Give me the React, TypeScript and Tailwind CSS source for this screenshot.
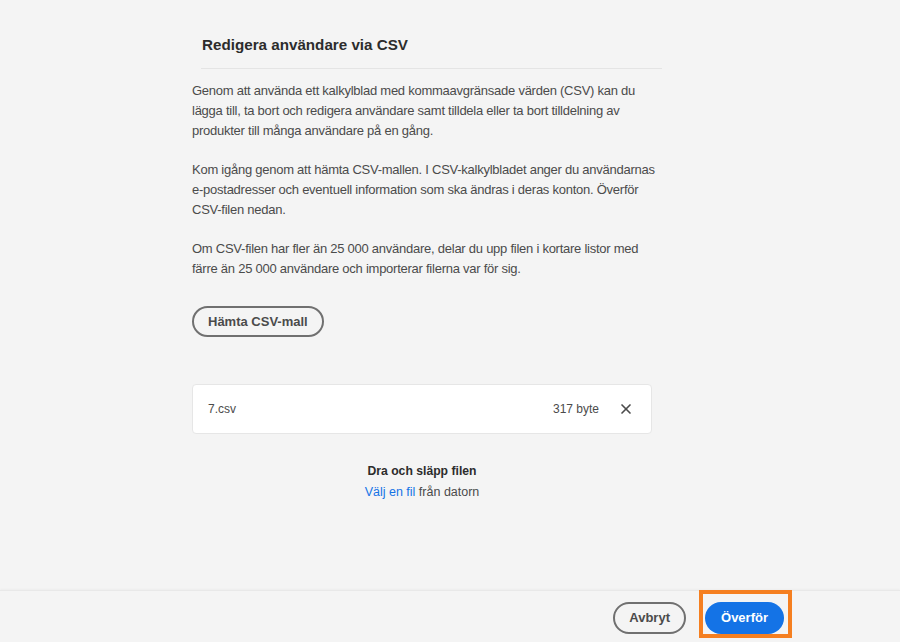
import { X } from "lucide-react";

const font = { fontFamily: '"Liberation Sans", Arial, sans-serif' };

export default function App() {
  return (
    <div className="flex h-[642px] w-[900px] flex-col overflow-hidden bg-[#f4f4f4] text-[#4b4b4b]" style={font}>
      <main className="flex-1 pl-[192px]">
        <div className="w-[470px]">
          <div className="ml-[9px] mt-[34px] border-b border-[#e4e4e4] pb-[12px] pl-[1px]">
            <h1 className="text-[15.2px] font-bold leading-[22px] text-[#2c2c2c]">Redigera användare via CSV</h1>
          </div>

          <div className="mt-[12px] w-[470px] whitespace-nowrap text-[13px] leading-[20px] tracking-[-0.25px] text-[#4b4b4b]">
            <p>
              Genom att använda ett kalkylblad med kommaavgränsade värden (CSV) kan du
              <br />
              lägga till, ta bort och redigera användare samt tilldela eller ta bort tilldelning av
              <br />
              produkter till många användare på en gång.
            </p>
            <p className="mt-[19px]">
              Kom igång genom att hämta CSV-mallen. I CSV-kalkylbladet anger du användarnas
              <br />
              e-postadresser och eventuell information som ska ändras i deras konton. Överför
              <br />
              CSV-filen nedan.
            </p>
            <p className="mt-[19px]">
              Om CSV-filen har fler än 25 000 användare, delar du upp filen i kortare listor med
              <br />
              färre än 25 000 användare och importerar filerna var för sig.
            </p>
          </div>

          <button className="mt-[27px] h-[31px] rounded-full border-2 border-[#707070] px-[14px] text-[13px] font-bold text-[#4b4b4b]">
            Hämta CSV-mall
          </button>

          <div className="mt-[47px] flex h-[50px] w-[460px] items-center rounded-[4px] border border-[#e6e6e6] bg-white pl-[15px] pr-[17px] text-[12px] text-[#4b4b4b]">
            <span className="flex-1">7.csv</span>
            <span>317 byte</span>
            <X className="ml-[19px] h-[16px] w-[16px] text-[#4b4b4b]" strokeWidth={2.5} />
          </div>

          <div className="mt-[27px] w-[460px] text-center leading-[21px]">
            <div className="text-[12.2px] font-bold text-[#2c2c2c]">Dra och släpp filen</div>
            <div className="text-[12.5px] text-[#4b4b4b]">
              <span className="text-[#1473e6]">Välj en fil</span> från datorn
            </div>
          </div>
        </div>
      </main>

      <footer className="flex h-[52px] items-start justify-end border-t border-[#e8e8e8] pr-[108px] shadow-[0_-1px_2px_rgba(0,0,0,0.03)]">
        <button className="mt-[11px] h-[32px] rounded-full border-2 border-[#707070] px-[14px] text-[13px] font-bold text-[#4b4b4b]">
          Avbryt
        </button>
        <div className="-mt-px ml-[13px] border-[4px] border-[#f57f20] pb-0 pl-[2px] pr-[4px] pt-[8px]">
          <button className="h-[32px] w-[79px] rounded-full bg-[#1473e6] text-[13px] font-bold text-white">Överför</button>
        </div>
      </footer>
    </div>
  );
}
